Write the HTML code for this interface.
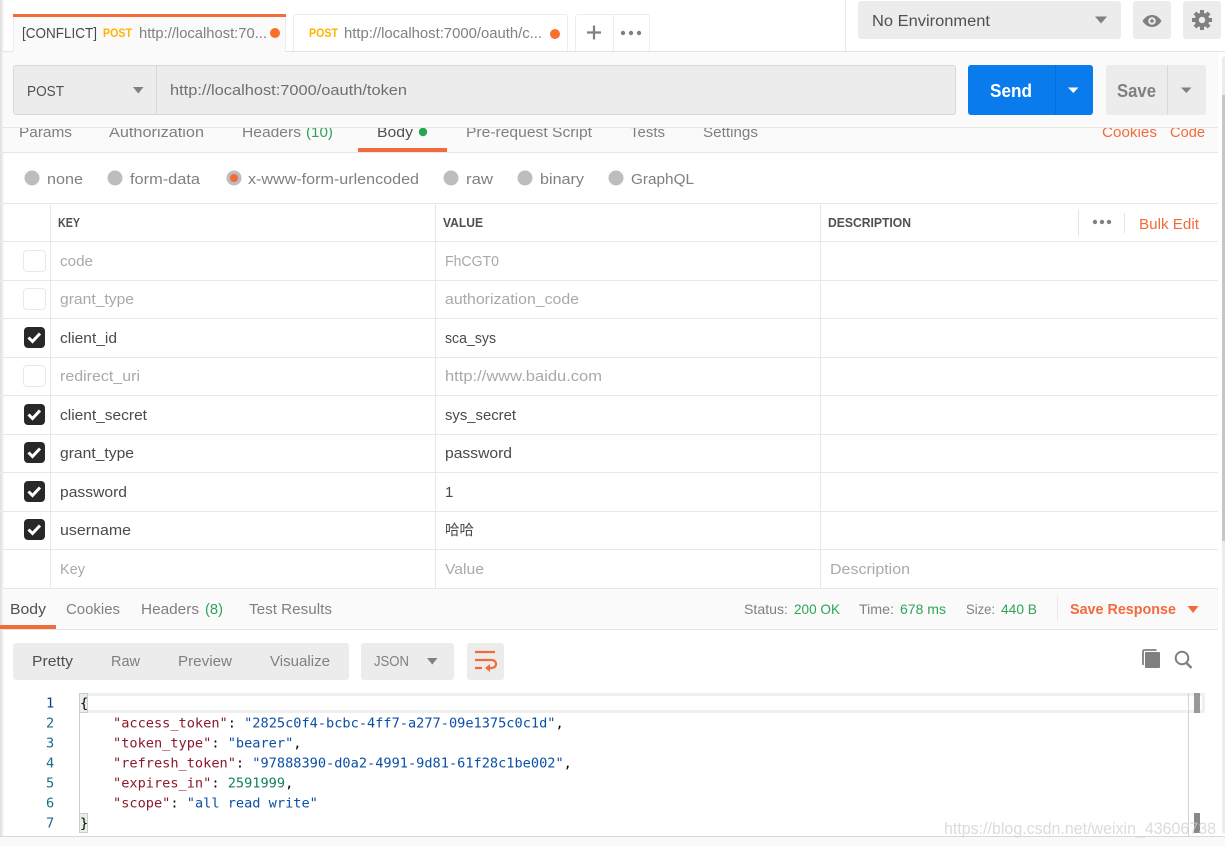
<!DOCTYPE html>
<html lang="en"><head><meta charset="utf-8"><title>Postman</title>
<style>
html,body{margin:0;padding:0;background:#fff;width:1225px;height:846px;overflow:hidden}
.b{position:absolute}
#root{position:relative;width:1225px;height:846px;overflow:hidden;background:#fff}
svg{position:absolute;left:0;top:0}
text{font-family:"Liberation Sans",sans-serif;font-size:15px;fill:#808080}
.d{fill:#505050}.o{fill:#f26b3a}.g{fill:#2fa35a}.l{fill:#a9a9a9}.k{fill:#4a4a4a}.h{font-size:12.5px;font-weight:bold;fill:#505050}
.p{font-size:11.5px;font-weight:bold;fill:#ffb400}
.m{font-family:"DejaVu Sans Mono",monospace;font-size:13.62px;fill:#000}
.n{fill:#1a6b8a}.r{fill:#8a1a2a}.s{fill:#0b4fa5}.v{fill:#128060}
.ck{position:absolute;left:23px;width:23px;height:22px;box-sizing:border-box;border:1px solid #e8e8e8;border-radius:4px;background:#fff}
.on{background:#282828;border:0;left:24px;width:21px;height:21px}
.hl{height:1px;left:0;width:1218px;background:#e8e8e8}
</style></head><body><div id="root">
<!-- left edge shadow -->
<div class="b" style="left:0;top:0;width:4px;height:846px;background:linear-gradient(90deg,#dcdcdc,rgba(240,240,240,.2))"></div>
<!-- top bar -->
<div class="b" style="left:0;top:51px;width:1225px;height:1px;background:#e4e4e4"></div>
<div class="b" style="left:845px;top:0;width:1px;height:51px;background:#e8e8e8"></div>
<!-- request area -->
<div class="b" style="left:3px;top:52px;width:1215px;height:100px;background:#fafafa"></div>
<div class="b" style="left:0;top:127px;width:1218px;height:1px;background:#e6e6e6"></div>
<div class="b" style="left:0;top:152px;width:1218px;height:1px;background:#e6e6e6"></div>
<!-- tabs -->
<div class="b" style="left:13px;top:14px;width:273px;height:38px;background:#fafafa;border-left:1px solid #eee;border-right:1px solid #eee;box-sizing:border-box"></div>
<div class="b" style="left:13px;top:14px;width:273px;height:3px;background:#f26b3a"></div>
<div class="b" style="left:293px;top:14px;width:275px;height:37px;box-sizing:border-box;border:1px solid #ececec;border-bottom:0;border-radius:3px 3px 0 0;background:#fff"></div>
<div class="b" style="left:575px;top:14px;width:75px;height:37px;box-sizing:border-box;border:1px solid #ececec;border-bottom:0;border-radius:3px 3px 0 0;background:#fff"></div>
<div class="b" style="left:613px;top:14px;width:1px;height:37px;background:#ececec"></div>
<!-- env -->
<div class="b" style="left:858px;top:1px;width:263px;height:38px;background:#ececec;border-radius:3px"></div>
<div class="b" style="left:1133px;top:1px;width:38px;height:38px;background:#ececec;border-radius:3px"></div>
<div class="b" style="left:1183px;top:1px;width:38px;height:38px;background:#ececec;border-radius:3px"></div>
<!-- URL bar -->
<div class="b" style="left:13px;top:65px;width:943px;height:50px;box-sizing:border-box;background:#ececec;border:1px solid #d8d8d8;border-radius:3px"></div>
<div class="b" style="left:156px;top:66px;width:1px;height:48px;background:#d8d8d8"></div>
<div class="b" style="left:968px;top:65px;width:125px;height:50px;background:#097bed;border-radius:3px"></div>
<div class="b" style="left:1055px;top:65px;width:1px;height:50px;background:#0a6fd4"></div>
<div class="b" style="left:1106px;top:65px;width:100px;height:50px;background:#ececec;border-radius:3px"></div>
<div class="b" style="left:1167px;top:65px;width:1px;height:50px;background:#d8d8d8"></div>
<div class="b" style="left:358px;top:148px;width:89px;height:4px;background:#f26b3a"></div>
<!-- table -->
<div class="b hl" style="top:203px"></div><div class="b hl" style="top:241px"></div><div class="b hl" style="top:280px"></div>
<div class="b hl" style="top:318px"></div><div class="b hl" style="top:357px"></div><div class="b hl" style="top:395px"></div>
<div class="b hl" style="top:434px"></div><div class="b hl" style="top:472px"></div><div class="b hl" style="top:511px"></div>
<div class="b hl" style="top:549px"></div><div class="b hl" style="top:588px"></div>
<div class="b" style="left:50px;top:203px;width:1px;height:385px;background:#e8e8e8"></div>
<div class="b" style="left:435px;top:203px;width:1px;height:385px;background:#e8e8e8"></div>
<div class="b" style="left:820px;top:203px;width:1px;height:385px;background:#e8e8e8"></div>
<div class="b" style="left:1078px;top:209px;width:1px;height:27px;background:#e4e4e4"></div>
<div class="b" style="left:1124px;top:213px;width:1px;height:20px;background:#e4e4e4"></div>
<div class="ck" style="top:250px"></div>
<div class="ck" style="top:288px"></div>
<div class="ck on" style="top:327px"></div>
<div class="ck" style="top:365px"></div>
<div class="ck on" style="top:404px"></div>
<div class="ck on" style="top:442px"></div>
<div class="ck on" style="top:481px"></div>
<div class="ck on" style="top:519px"></div>
<!-- response -->
<div class="b" style="left:3px;top:589px;width:1215px;height:40px;background:#fafafa"></div>
<div class="b" style="left:0;top:629px;width:1218px;height:1px;background:#e6e6e6"></div>
<div class="b" style="left:0;top:625px;width:56px;height:4px;background:#f26b3a"></div>
<div class="b" style="left:1057px;top:596px;width:1px;height:25px;background:#e8e8e8"></div>
<div class="b" style="left:13px;top:643px;width:336px;height:37px;background:#ececec;border-radius:3px"></div>
<div class="b" style="left:361px;top:643px;width:93px;height:37px;background:#ececec;border-radius:3px"></div>
<div class="b" style="left:467px;top:643px;width:37px;height:37px;background:#ececec;border-radius:3px"></div>
<!-- editor -->
<div class="b" style="left:79px;top:693px;width:1126px;height:20px;box-sizing:border-box;border:solid #efefef;border-width:3px 0;"></div>
<div class="b" style="left:1202px;top:693px;width:3px;height:20px;background:#efefef"></div>
<div class="b" style="left:79px;top:693px;width:1px;height:140px;background:#ccc"></div>
<div class="b" style="left:79px;top:693px;width:9px;height:20px;background:#e8efe8;border:1px solid #ccc;box-sizing:border-box"></div>
<div class="b" style="left:79px;top:813px;width:9px;height:20px;background:#e8efe8;border:1px solid #ccc;box-sizing:border-box"></div>
<div class="b" style="left:1188px;top:693px;width:1px;height:143px;background:#d4d4d4"></div>
<div class="b" style="left:1194px;top:693px;width:6px;height:20px;background:#999"></div>
<div class="b" style="left:1194px;top:813px;width:6px;height:20px;background:#888"></div>
<!-- bottom -->
<div class="b" style="left:0;top:836px;width:1225px;height:10px;background:#f9f9f9;border-top:1px solid #d8d8d8;box-sizing:border-box"></div>
<!-- right scrollbar -->
<div class="b" style="left:1222px;top:56px;width:3px;height:778px;background:#ececec;border-radius:3px 0 0 3px"></div>
<div class="b" style="left:1222px;top:95px;width:3px;height:446px;background:#c6c6c6"></div>

<svg width="1225" height="846" viewBox="0 0 1225 846">
<defs><clipPath id="cl"><rect x="0" y="128" width="1218" height="24"/></clipPath></defs>
<!-- tabs text -->
<text x="22" y="38" class="k" textLength="75" lengthAdjust="spacingAndGlyphs" style="font-size:14.500px">[CONFLICT]</text>
<text x="103" y="37" class="p" textLength="29" lengthAdjust="spacingAndGlyphs">POST</text>
<text x="139" y="38" textLength="128" lengthAdjust="spacingAndGlyphs">http://localhost:70...</text>
<circle cx="275" cy="33" r="5" fill="#f9702b"/>
<text x="309" y="37" class="p" textLength="29" lengthAdjust="spacingAndGlyphs">POST</text>
<text x="344" y="38" textLength="198" lengthAdjust="spacingAndGlyphs">http://localhost:7000/oauth/c...</text>
<circle cx="555" cy="34" r="5" fill="#f9702b"/>
<path d="M594 25.500v14M587 32.500h14" stroke="#808080" stroke-width="2.200" fill="none"/>
<circle cx="623" cy="33" r="2.200" fill="#808080"/><circle cx="631" cy="33" r="2.200" fill="#808080"/><circle cx="639" cy="33" r="2.200" fill="#808080"/>
<!-- env -->
<text x="872" y="26" class="d" textLength="118" lengthAdjust="spacingAndGlyphs" style="font-size:15.500px">No Environment</text>
<path d="M1095 16.500h12l-6 7z" fill="#808080"/>
<path d="M1142.500 21c2.500-4 5.800-6 9.500-6s7 2 9.500 6c-2.500 4-5.800 6-9.500 6s-7-2-9.500-6z" fill="#808080"/>
<circle cx="1152" cy="21" r="3.800" fill="#ececec"/><circle cx="1152" cy="21" r="1.800" fill="#808080"/>
<g transform="translate(1202 20)" fill="#808080">
<circle r="7.300"/>
<g><rect x="-2" y="-10" width="4" height="4.500"/><rect x="-2" y="5.500" width="4" height="4.500"/><rect x="-10" y="-2" width="4.500" height="4"/><rect x="5.500" y="-2" width="4.500" height="4"/></g>
<g transform="rotate(45)"><rect x="-2" y="-10" width="4" height="4.500"/><rect x="-2" y="5.500" width="4" height="4.500"/><rect x="-10" y="-2" width="4.500" height="4"/><rect x="5.500" y="-2" width="4.500" height="4"/></g>
<circle r="3.200" fill="#ececec"/>
</g>
<!-- url row -->
<text x="27" y="96" class="d" textLength="37" lengthAdjust="spacingAndGlyphs">POST</text>
<path d="M133 87h10.500l-5.200 6.500z" fill="#808080"/>
<text x="170" y="95" textLength="237" lengthAdjust="spacingAndGlyphs" style="fill:#6f6f6f">http://localhost:7000/oauth/token</text>
<text x="990" y="97" textLength="42" lengthAdjust="spacingAndGlyphs" style="font-size:18px;font-weight:bold;fill:#fff">Send</text>
<path d="M1068 87.500h10.500l-5.200 5.500z" fill="#fff"/>
<text x="1117" y="97" textLength="39" lengthAdjust="spacingAndGlyphs" style="font-size:18px;font-weight:bold;fill:#808080">Save</text>
<path d="M1181 87.500h10.500l-5.200 5.500z" fill="#808080"/>
<!-- request tabs (clipped at top) -->
<g clip-path="url(#cl)">
<text x="19" y="137" textLength="53" lengthAdjust="spacingAndGlyphs">Params</text>
<text x="109" y="137" textLength="95" lengthAdjust="spacingAndGlyphs">Authorization</text>
<text x="242" y="137" textLength="59" lengthAdjust="spacingAndGlyphs">Headers</text>
<text x="306" y="137" class="g" textLength="27" lengthAdjust="spacingAndGlyphs">(10)</text>
<text x="377" y="137" class="d" textLength="36" lengthAdjust="spacingAndGlyphs">Body</text>
<circle cx="423" cy="132" r="4.200" fill="#26a550"/>
<text x="466" y="137" textLength="126" lengthAdjust="spacingAndGlyphs">Pre-request Script</text>
<text x="630" y="137" textLength="35" lengthAdjust="spacingAndGlyphs">Tests</text>
<text x="703" y="137" textLength="55" lengthAdjust="spacingAndGlyphs">Settings</text>
<text x="1102" y="137" class="o" textLength="55" lengthAdjust="spacingAndGlyphs">Cookies</text>
<text x="1170" y="137" class="o" textLength="35" lengthAdjust="spacingAndGlyphs">Code</text>
</g>
<!-- radios -->
<g fill="#bdbdbd"><circle cx="32" cy="178" r="7.500"/><circle cx="115" cy="178" r="7.500"/><circle cx="234" cy="178" r="7.500"/><circle cx="451" cy="178" r="7.500"/><circle cx="525" cy="178" r="7.500"/><circle cx="616" cy="178" r="7.500"/></g>
<circle cx="234" cy="178" r="4" fill="#f26b3a"/>
<text x="47" y="184" textLength="36" lengthAdjust="spacingAndGlyphs">none</text>
<text x="130" y="184" textLength="70" lengthAdjust="spacingAndGlyphs">form-data</text>
<text x="248" y="184" textLength="171" lengthAdjust="spacingAndGlyphs">x-www-form-urlencoded</text>
<text x="466" y="184" textLength="27" lengthAdjust="spacingAndGlyphs">raw</text>
<text x="540" y="184" textLength="44" lengthAdjust="spacingAndGlyphs">binary</text>
<text x="631" y="184" textLength="63" lengthAdjust="spacingAndGlyphs">GraphQL</text>
<!-- header row -->
<text x="58" y="227" class="h" textLength="22" lengthAdjust="spacingAndGlyphs">KEY</text>
<text x="443" y="227" class="h" textLength="40" lengthAdjust="spacingAndGlyphs">VALUE</text>
<text x="828" y="227" class="h" textLength="83" lengthAdjust="spacingAndGlyphs">DESCRIPTION</text>
<circle cx="1095" cy="222" r="2.200" fill="#808080"/><circle cx="1102" cy="222" r="2.200" fill="#808080"/><circle cx="1109" cy="222" r="2.200" fill="#808080"/>
<text x="1139" y="229" class="o" textLength="60" lengthAdjust="spacingAndGlyphs">Bulk Edit</text>
<!-- rows -->
<text x="60" y="266" class="l" textLength="33" lengthAdjust="spacingAndGlyphs">code</text>
<text x="445" y="266" class="l" textLength="54" lengthAdjust="spacingAndGlyphs">FhCGT0</text>
<text x="60" y="304" class="l" textLength="74" lengthAdjust="spacingAndGlyphs">grant_type</text>
<text x="445" y="304" class="l" textLength="134" lengthAdjust="spacingAndGlyphs">authorization_code</text>
<text x="60" y="343" class="k" textLength="57" lengthAdjust="spacingAndGlyphs">client_id</text>
<text x="445" y="343" class="k" textLength="51" lengthAdjust="spacingAndGlyphs">sca_sys</text>
<text x="60" y="381" class="l" textLength="80" lengthAdjust="spacingAndGlyphs">redirect_uri</text>
<text x="445" y="381" class="l" textLength="157" lengthAdjust="spacingAndGlyphs">http://www.baidu.com</text>
<text x="60" y="420" class="k" textLength="87" lengthAdjust="spacingAndGlyphs">client_secret</text>
<text x="445" y="420" class="k" textLength="71" lengthAdjust="spacingAndGlyphs">sys_secret</text>
<text x="60" y="458" class="k" textLength="74" lengthAdjust="spacingAndGlyphs">grant_type</text>
<text x="445" y="458" class="k" textLength="67" lengthAdjust="spacingAndGlyphs">password</text>
<text x="60" y="497" class="k" textLength="67" lengthAdjust="spacingAndGlyphs">password</text>
<text x="445" y="497" class="k">1</text>
<text x="60" y="535" class="k" textLength="71" lengthAdjust="spacingAndGlyphs">username</text>
<text x="445" y="535" class="k" style='font-family:"Liberation Sans","Noto Sans CJK SC",sans-serif;font-size:14.5px'>哈哈</text>
<text x="60" y="574" class="l" textLength="25" lengthAdjust="spacingAndGlyphs">Key</text>
<text x="445" y="574" class="l" textLength="39" lengthAdjust="spacingAndGlyphs">Value</text>
<text x="830" y="574" class="l" textLength="80" lengthAdjust="spacingAndGlyphs">Description</text>
<!-- checks -->
<g fill="none" stroke="#fff" stroke-width="3"><path d="M28.500 337.500l4 4 7.500-8"/><path d="M28.500 414.500l4 4 7.500-8"/><path d="M28.500 452.500l4 4 7.500-8"/><path d="M28.500 491.500l4 4 7.500-8"/><path d="M28.500 529.500l4 4 7.500-8"/></g>
<!-- response bar -->
<text x="10" y="614" class="d" textLength="36" lengthAdjust="spacingAndGlyphs">Body</text>
<text x="66" y="614" textLength="54" lengthAdjust="spacingAndGlyphs">Cookies</text>
<text x="141" y="614" textLength="58" lengthAdjust="spacingAndGlyphs">Headers</text>
<text x="205" y="614" class="g" textLength="18" lengthAdjust="spacingAndGlyphs">(8)</text>
<text x="249" y="614" textLength="83" lengthAdjust="spacingAndGlyphs">Test Results</text>
<text x="744" y="614" textLength="44" lengthAdjust="spacingAndGlyphs" style="font-size:14px">Status:</text>
<text x="794" y="614" class="g" textLength="46" lengthAdjust="spacingAndGlyphs" style="font-size:14px">200 OK</text>
<text x="859" y="614" textLength="35" lengthAdjust="spacingAndGlyphs" style="font-size:14px">Time:</text>
<text x="900" y="614" class="g" textLength="46" lengthAdjust="spacingAndGlyphs" style="font-size:14px">678 ms</text>
<text x="966" y="614" textLength="29" lengthAdjust="spacingAndGlyphs" style="font-size:14px">Size:</text>
<text x="1001" y="614" class="g" textLength="36" lengthAdjust="spacingAndGlyphs" style="font-size:14px">440 B</text>
<text x="1070" y="614" class="o" textLength="106" lengthAdjust="spacingAndGlyphs" style="font-weight:bold;font-size:15px">Save Response</text>
<path d="M1187.500 606h11l-5.500 7z" fill="#f26b3a"/>
<!-- view modes -->
<text x="32" y="666" class="d" textLength="41" lengthAdjust="spacingAndGlyphs">Pretty</text>
<text x="111" y="666" textLength="29" lengthAdjust="spacingAndGlyphs">Raw</text>
<text x="178" y="666" textLength="54" lengthAdjust="spacingAndGlyphs">Preview</text>
<text x="270" y="666" textLength="60" lengthAdjust="spacingAndGlyphs">Visualize</text>
<text x="374" y="666" textLength="35" lengthAdjust="spacingAndGlyphs">JSON</text>
<path d="M427 658h10.500l-5.200 6.500z" fill="#808080"/>
<path d="M475 652h20M475 660h17a4 4 0 0 1 0 8h-4M475 668h7" fill="none" stroke="#f26b3a" stroke-width="2.200"/>
<path d="M490 664l-5 4 5 4z" fill="#f26b3a"/>
<!-- copy / search -->
<path d="M1143 665v-13.500a1.500 1.500 0 0 1 1.500-1.500h12" fill="none" stroke="#808080" stroke-width="1.800"/>
<rect x="1145" y="652" width="15" height="16" rx="1" fill="#808080"/>
<circle cx="1182" cy="658" r="6.300" fill="none" stroke="#808080" stroke-width="2"/>
<path d="M1186.500 663l5 5" stroke="#808080" stroke-width="2.400"/>
<!-- gutter -->
<g>
<text x="46" y="707.500" class="m n" style="fill:#0b3f8a">1</text>
<text x="46" y="727.500" class="m n">2</text><text x="46" y="747.500" class="m n">3</text><text x="46" y="767.500" class="m n">4</text><text x="46" y="787.500" class="m n">5</text><text x="46" y="807.500" class="m n">6</text><text x="46" y="827.500" class="m n">7</text>
</g>
<!-- code -->
<text x="80" y="707.500" class="m">{</text>
<text y="727.500" class="m" x="113" xml:space="preserve"><tspan class="r">"access_token"</tspan>: <tspan class="s">"2825c0f4-bcbc-4ff7-a277-09e1375c0c1d"</tspan>,</text>
<text y="747.500" class="m" x="113" xml:space="preserve"><tspan class="r">"token_type"</tspan>: <tspan class="s">"bearer"</tspan>,</text>
<text y="767.500" class="m" x="113" xml:space="preserve"><tspan class="r">"refresh_token"</tspan>: <tspan class="s">"97888390-d0a2-4991-9d81-61f28c1be002"</tspan>,</text>
<text y="787.500" class="m" x="113" xml:space="preserve"><tspan class="r">"expires_in"</tspan>: <tspan class="v">2591999</tspan>,</text>
<text y="807.500" class="m" x="113" xml:space="preserve"><tspan class="r">"scope"</tspan>: <tspan class="s">"all read write"</tspan></text>
<text x="80" y="827.500" class="m">}</text>
<!-- watermark -->
<text x="944" y="834" textLength="272" lengthAdjust="spacingAndGlyphs" style="font-size:17px;fill:#cfcfcf;opacity:.75">https://blog.csdn.net/weixin_43606738</text>
</svg>
</div></body></html>
